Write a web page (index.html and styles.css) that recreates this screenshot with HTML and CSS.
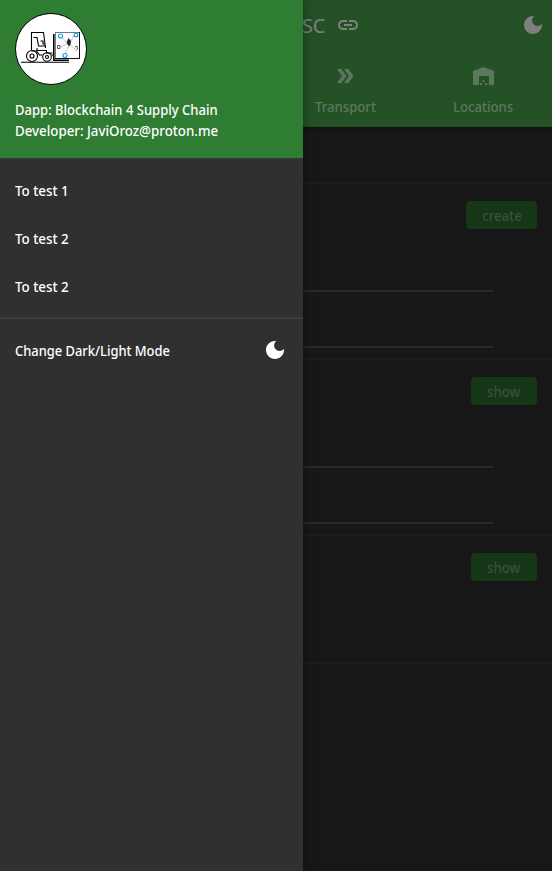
FILE: index.html
```html
<!DOCTYPE html>
<html lang="en">
<head>
<meta charset="utf-8">
<title>Blockchain 4 Supply Chain</title>
<link rel="stylesheet" href="styles.css">
</head>
<body>
<svg width="0" height="0" class="defs"><defs><path id="moon" d="M12 3c-4.97 0-9 4.03-9 9s4.03 9 9 9 9-4.03 9-9c0-.46-.04-.92-.1-1.36-.98 1.37-2.58 2.26-4.4 2.26-2.98 0-5.4-2.42-5.4-5.4 0-1.81.89-3.42 2.26-4.4-.44-.06-.9-.1-1.36-.1z"/></defs></svg>
<div class="page">
  <header class="appbar">
    <div class="toolbar">
      <span class="title">SC</span>
      <svg class="icon" viewBox="0 0 24 24"><path d="M3.9 12c0-1.71 1.39-3.1 3.1-3.1h4V7H7c-2.76 0-5 2.24-5 5s2.24 5 5 5h4v-1.9H7c-1.71 0-3.1-1.39-3.1-3.1zM8 13h8v-2H8v2zm9-6h-4v1.9h4c1.71 0 3.1 1.39 3.1 3.1s-1.39 3.1-3.1 3.1h-4V17h4c2.76 0 5-2.24 5-5s-2.24-5-5-5z"/></svg>
      <svg class="icon mode" viewBox="0 0 24 24"><use href="#moon"/></svg>
    </div>
    <nav class="tabs">
      <div class="tab transport"><svg class="icon" viewBox="0 0 24 24"><path d="M15.500 5H11l5 7-5 7h4.500l5-7zM8.500 5H4l5 7-5 7h4.500l5-7z"/></svg><span class="text t-tab">Transport</span></div>
      <div class="tab"><svg class="icon" viewBox="0 0 24 24"><path d="M2 21V7l10.500-4L23 7v14h-5v-9H8v9H2zm9-2H9v2h2v-2zm2.500-3h-2v2h2v-2zm2.500 3h-2v2h2v-2z"/></svg><span class="text t-tab">Locations</span></div>
    </nav>
  </header>
  <main>
    <section class="intro"></section>
    <section class="card"><button class="create"><span class="text t-button">create</span></button><div class="field"></div><div class="field"></div></section>
    <section class="card"><button><span class="text t-button">show</span></button><div class="field"></div><div class="field"></div></section>
    <section class="card short"><button><span class="text t-button">show</span></button></section>
  </main>
</div>
<aside class="drawer">
  <div class="profile">
    <svg class="logo" viewBox="0 0 72 72">
      <circle cx="36" cy="36" r="35.500" fill="#fff" stroke="#000"/>
      <g fill="none" stroke="#000" stroke-width="1.100">
        <path d="M6 49.300h48M16.500 37V19.500H28.500l2 15.500M18.500 24.500H22l1.500 8.500H31M25.500 28h2.500v3h2M22 35v2.500h9.500v2.500h6M16.500 38h5l3 4h3M36.500 42h2"/>
        <circle cx="17" cy="43" r="5.500"/><circle cx="17" cy="43" r="2"/>
        <circle cx="32" cy="44" r="4.300"/><circle cx="32" cy="44" r="1.500"/>
        <path d="M38.800 21v26.300H54" stroke-width="1.600"/>
      </g>
      <rect x="40.500" y="19.500" width="24" height="26" fill="#fff" stroke="#777"/>
      <path d="M64.500 19v26.500H40" fill="none" stroke="#111"/>
      <path d="m47 25 13 11m-1.500-13L50 41M46 34l8-4" fill="none" stroke="#888" stroke-width=".7" stroke-dasharray="2 1"/>
      <path d="m53.500 25 2.500 3-.5 3.500-1.500 2-2.500-4z" fill="#222"/>
      <g fill="none" stroke="#19a6ee" stroke-width="1.200"><circle cx="45.500" cy="23" r="2"/><circle cx="61" cy="22" r="1.900"/><circle cx="50" cy="42.500" r="2"/></g>
      <path d="M42.500 32.500h2.500v3h-2.500zM60 34l2-1 .5 3-1.500 1.500" fill="none" stroke="#333" stroke-width=".8"/>
    </svg>
    <div class="line"><span class="text t-dapp">Dapp: Blockchain 4 Supply Chain</span></div>
    <div class="line"><span class="text t-dev">Developer: JaviOroz@proton.me</span></div>
  </div>
  <div class="menu">
    <div class="item"><span class="text t-test">To test 1</span></div>
    <div class="item"><span class="text t-test">To test 2</span></div>
    <div class="item"><span class="text t-test">To test 2</span></div>
  </div>
  <div class="item switch"><span class="text t-change">Change Dark/Light Mode</span><svg class="icon" viewBox="0 0 24 24"><use href="#moon"/></svg></div>
</aside>
</body>
</html>
```
FILE: styles.css
```css
* { box-sizing: border-box; }
body { margin: 0; background: #171717; font: 500 14px/21px "Noto Sans", sans-serif; overflow: hidden; }
.defs { position: absolute; }
.icon { width: 24px; height: 24px; fill: currentColor; flex: none; display: block; }
.text { display: inline-block; transform-origin: left center; }
.t-dapp { transform: scaleX(.931); }
.t-dev { transform: scaleX(.949); }
.t-test { transform: scaleX(.955); }
.t-change { transform: scaleX(.922); }
.t-tab { transform: scaleX(.94); transform-origin: center; }
.t-button { transform: scaleX(.94); transform-origin: center; }
.page { height: 871px; }
.appbar { height: 127px; background: #245126; box-shadow: 0 2px 4px rgba(0,0,0,.35); }
.toolbar { height: 50px; display: flex; align-items: center; padding: 0 7px 0 302px; color: #7f7f7f; }
.title { width: 24px; margin-right: 9.5px; font-size: 20px; font-weight: 400; letter-spacing: -.3px; }
.mode { margin-left: auto; }
.tabs { display: grid; grid-template-columns: repeat(4, 1fr); color: #5d765e; }
.tab { display: flex; flex-direction: column; align-items: center; padding-top: 14px; gap: 8px; }
.transport { grid-column: 3; }
.intro { height: 57px; border-bottom: 2px solid #1d1d1d; }
.card { height: 176px; padding: 17px 15px 0; border-bottom: 2px solid #1d1d1d; display: flex; flex-direction: column; align-items: flex-end; }
.short { height: 128px; }
button { width: 66px; height: 28px; flex: none; padding: 2px 0 0; border: 0; border-radius: 4px; background: #163717; color: #3a513b; font: 500 14px/20px "Noto Sans", sans-serif; }
.create { width: 71px; }
.field { width: 100%; padding-right: 44px; height: 56px; flex: none; display: flex; align-items: flex-end; }
.field::after { content: ""; flex: 1; height: 2px; background: #292929; }
button + .field { height: 63px; }
.drawer { position: absolute; left: 0; top: 0; width: 303px; height: 871px; background: #303030; color: #fff; box-shadow: 0 0 10px rgba(0,0,0,.4); }
.profile { height: 159px; padding: 13px 15px 0; background: #2f7d32; border-bottom: 1px solid #383838; }
.logo { width: 72px; height: 72px; display: block; margin-bottom: 14px; }
.line { height: 21px; white-space: nowrap; }
.menu { height: 160px; padding-top: 7px; border-bottom: 2px solid #3d3d3d; }
.item { height: 48px; padding: 0 16px 0 15px; display: flex; align-items: center; justify-content: space-between; white-space: nowrap; }
.switch { margin-top: 7px; }
```
